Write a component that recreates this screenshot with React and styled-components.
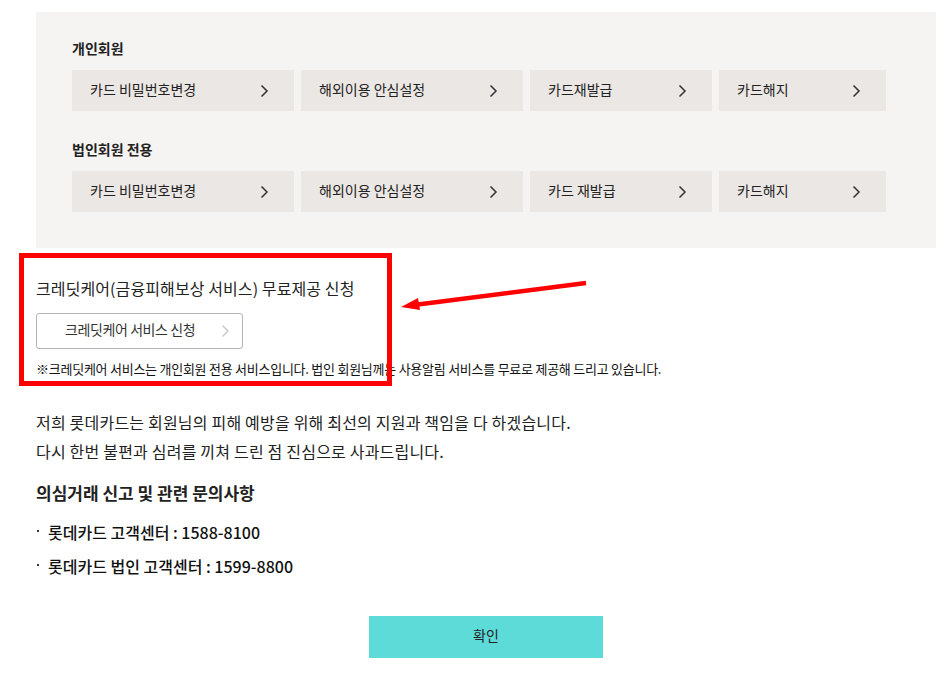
import React from 'react';
import styled, { createGlobalStyle } from 'styled-components';

const GlobalStyle = createGlobalStyle`
  body {
    margin: 0;
    background: #fff;
    font-family: "Noto Sans CJK KR", "Noto Sans", sans-serif;
    color: #222;
  }
`;

const personal = [
  { label: '카드 비밀번호변경', width: 222 },
  { label: '해외이용 안심설정', width: 222 },
  { label: '카드재발급', width: 182 },
  { label: '카드해지', width: 167 },
];

const corporate = [
  { label: '카드 비밀번호변경', width: 222 },
  { label: '해외이용 안심설정', width: 222 },
  { label: '카드 재발급', width: 182 },
  { label: '카드해지', width: 167 },
];

const Chevron = ({ color = '#333' }) => (
  <svg width="9" height="14" viewBox="0 0 9 14">
    <path d="M1.5 1.5 L7 7 L1.5 12.5" fill="none" stroke={color} strokeWidth="1.5" />
  </svg>
);

const App = () => {
  return (
    <>
      <GlobalStyle />
      <Page>
        <Panel>
          <Section>
            <SectionTitle>개인회원</SectionTitle>
            <ButtonRow>
              {personal.map((b) => (
                <MenuButton key={b.label} $w={b.width}>
                  <Label>{b.label}</Label>
                  <Chevron />
                </MenuButton>
              ))}
            </ButtonRow>
          </Section>
          <Section $second>
            <SectionTitle>법인회원 전용</SectionTitle>
            <ButtonRow>
              {corporate.map((b) => (
                <MenuButton key={b.label} $w={b.width}>
                  <Label>{b.label}</Label>
                  <Chevron />
                </MenuButton>
              ))}
            </ButtonRow>
          </Section>
        </Panel>

        <CreditTitle>크레딧케어(금융피해보상 서비스) 무료제공 신청</CreditTitle>
        <OutlineButton>
          <Label>크레딧케어 서비스 신청</Label>
          <ChevronSlot>
            <Chevron color="#ccc" />
          </ChevronSlot>
        </OutlineButton>
        <Note>※크레딧케어 서비스는 개인회원 전용 서비스입니다. 법인 회원님께는 사용알림 서비스를 무료로 제공해 드리고 있습니다.</Note>

        <Paragraph>
          저희 롯데카드는 회원님의 피해 예방을 위해 최선의 지원과 책임을 다 하겠습니다.
          <br />
          다시 한번 불편과 심려를 끼쳐 드린 점 진심으로 사과드립니다.
        </Paragraph>

        <Heading>의심거래 신고 및 관련 문의사항</Heading>
        <ContactList>
          <li>롯데카드 고객센터 : 1588-8100</li>
          <li>롯데카드 법인 고객센터 : 1599-8800</li>
        </ContactList>

        <ButtonWrap>
          <ConfirmButton>
            <Label>확인</Label>
          </ConfirmButton>
        </ButtonWrap>

        <RedBox />
        <Arrow width="200" height="40" viewBox="0 0 200 40">
          <line x1="188" y1="5" x2="16" y2="27" stroke="#ff0000" strokeWidth="4.5" />
          <polygon points="3,29 20,20 22,32" fill="#ff0000" />
        </Arrow>
      </Page>
    </>
  );
};

export default App;

const Page = styled.div`
  position: relative;
  width: 900px;
  padding: 12px 0 40px 36px;
`;

const Panel = styled.div`
  background: #f5f4f2;
  padding: 26px 36px 36px;
`;

const Section = styled.div`
  margin-top: ${({ $second }) => ($second ? '28px' : '0')};
`;

const SectionTitle = styled.div`
  font-size: 14px;
  font-weight: 700;
  line-height: 20px;
  color: #222;
  margin-bottom: 12px;
`;

const ButtonRow = styled.div`
  display: flex;
  gap: 7px;
`;

const Label = styled.span`
  padding-bottom: 4px;
`;

const MenuButton = styled.div`
  display: flex;
  align-items: center;
  justify-content: space-between;
  box-sizing: border-box;
  width: ${({ $w }) => $w}px;
  height: 41px;
  padding: 0 25px 0 18px;
  background: #ebe7e4;
  font-size: 14px;
  color: #222;
`;

const CreditTitle = styled.div`
  margin-top: 28px;
  font-size: 16px;
  line-height: 24px;
  letter-spacing: 0.1px;
  color: #222;
`;

const OutlineButton = styled.div`
  position: relative;
  margin-top: 13px;
  box-sizing: border-box;
  width: 207px;
  height: 36px;
  border: 1px solid #b5b5b5;
  border-radius: 3px;
  display: flex;
  align-items: center;
  padding-left: 28px;
  font-size: 14px;
  letter-spacing: -0.4px;
  color: #333;
`;

const ChevronSlot = styled.span`
  position: absolute;
  right: 12px;
  top: 10px;
  line-height: 0;
`;

const Note = styled.div`
  margin-top: 11px;
  font-size: 13px;
  line-height: 18px;
  letter-spacing: -0.25px;
  color: #111;
`;

const Paragraph = styled.p`
  margin: 30px 0 0;
  font-size: 16px;
  line-height: 29px;
  letter-spacing: 0.2px;
  color: #222;
`;

const Heading = styled.div`
  margin-top: 14px;
  font-size: 17px;
  font-weight: 700;
  line-height: 26px;
  color: #222;
`;

const ContactList = styled.ul`
  list-style: none;
  margin: 14px 0 0;
  padding: 0;
  display: flex;
  flex-direction: column;
  gap: 10px;

  li {
    position: relative;
    padding-left: 12px;
    font-size: 16px;
    font-weight: 500;
    line-height: 24px;
    color: #111;
  }

  li::before {
    content: '';
    position: absolute;
    left: 1px;
    top: 10px;
    width: 2px;
    height: 2px;
    background: #333;
  }
`;

const ButtonWrap = styled.div`
  display: flex;
  justify-content: center;
  margin-top: 38px;
`;

const ConfirmButton = styled.button`
  display: flex;
  align-items: center;
  justify-content: center;
  width: 234px;
  height: 42px;
  padding: 0;
  border: none;
  background: #5ddbd9;
  font-family: "Noto Sans CJK KR", sans-serif;
  font-size: 14px;
  color: #222;
`;

const RedBox = styled.div`
  position: absolute;
  left: 19px;
  top: 253px;
  width: 373px;
  height: 133px;
  box-sizing: border-box;
  border: 5px solid #ff0000;
  pointer-events: none;
`;

const Arrow = styled.svg`
  position: absolute;
  left: 398px;
  top: 278px;
`;
